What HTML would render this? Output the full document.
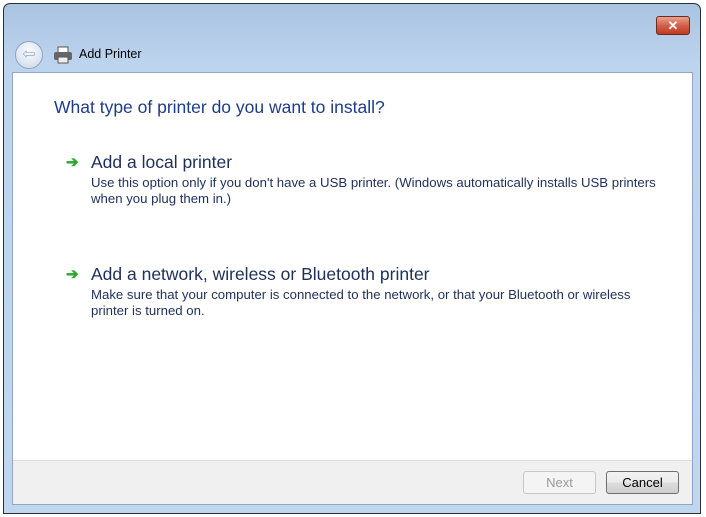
<html><head><style>
body{margin:0;width:706px;height:517px;background:#fff;font-family:"Liberation Sans",sans-serif;position:relative;overflow:hidden}
.win{position:absolute;left:3px;top:3px;width:696px;height:509px;border:1px solid #2a2f38;border-radius:7px 7px 0 0;background:linear-gradient(#a9c3e1,#bdd4ee 60px,#c0d6ef);}
.client{position:absolute;left:8px;top:68px;width:679px;height:431px;background:#fff;border:1px solid #8ea7c4}
.footer{position:absolute;left:0;right:0;bottom:0;height:43px;background:#f0f0f0;border-top:1px solid #dfdfdf}
.btn{position:absolute;top:10px;width:71px;height:21px;border:1px solid #707070;border-radius:3px;background:linear-gradient(#f2f2f2,#ebebeb 50%,#dddddd 51%,#cfcfcf);font-size:13px;text-align:center;line-height:21px;color:#000}
.h{position:absolute;font-size:17.5px;color:#1e3b8c}
.t{position:absolute;font-size:17.5px;color:#1e2f5a}
.d{position:absolute;font-size:13.2px;line-height:16px;color:#1e2f5a;white-space:nowrap}
.ar{position:absolute;font-size:15px;font-weight:bold;color:#2aa52a}
</style></head><body>
<div class="win">
<div style="position:absolute;left:652px;top:12px;width:32px;height:17px;border:1px solid #6d2a20;border-radius:3px;background:linear-gradient(#e9a28f,#d1604a 50%,#c03a22);color:#fff;font-size:13px;font-weight:bold;text-align:center;line-height:17px">✕</div>
<div style="position:absolute;left:11px;top:37px;width:26px;height:26px;border-radius:50%;border:1px solid #8ea3bd;background:radial-gradient(circle at 50% 35%,#fafcff,#c9d7e8);color:#9fb2c9;font-size:16px;text-align:center;line-height:26px">⇦</div>
<svg style="position:absolute;left:49px;top:42px" width="20" height="18"><rect x="5" y="1" width="10" height="6" fill="#fff" stroke="#555"/><rect x="1" y="6" width="18" height="8" rx="2" fill="#666"/><rect x="5" y="11" width="10" height="6" fill="#eee" stroke="#555"/></svg>
<div style="position:absolute;left:75px;top:43px;font-size:12.5px;color:#000">Add Printer</div>
<div class="client">
<div class="h" style="left:41px;top:24px">What type of printer do you want to install?</div>
<div class="ar" style="left:53px;top:80px">➔</div>
<div class="t" style="left:78px;top:79px">Add a local printer</div>
<div class="d" style="left:78px;top:102px">Use this option only if you don't have a USB printer. (Windows automatically installs USB printers<br>when you plug them in.)</div>
<div class="ar" style="left:53px;top:192px">➔</div>
<div class="t" style="left:78px;top:191px">Add a network, wireless or Bluetooth printer</div>
<div class="d" style="left:78px;top:214px">Make sure that your computer is connected to the network, or that your Bluetooth or wireless<br>printer is turned on.</div>
<div class="footer">
<div class="btn" style="left:510px;border-color:#c6c6c6;background:#f4f4f4;color:#9a9a9a">Next</div>
<div class="btn" style="left:593px">Cancel</div>
</div>
</div>
</div>
</body></html>
